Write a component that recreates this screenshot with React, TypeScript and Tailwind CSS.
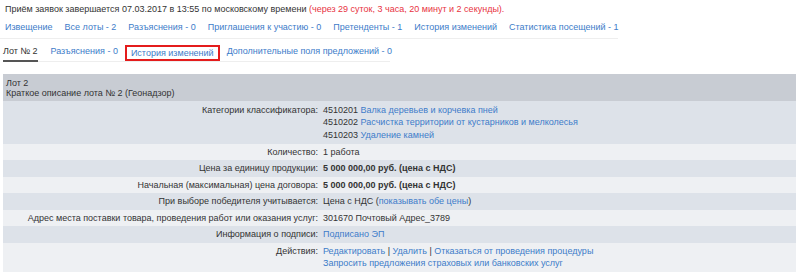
const LINK = "text-[#3d7cc9]";

const topTabs = [
  "Извещение",
  "Все лоты - 2",
  "Разъяснения - 0",
  "Приглашения к участию - 0",
  "Претенденты - 1",
  "История изменений",
  "Статистика посещений - 1",
];

type Row = {
  label: string;
  value: React.ReactNode;
};

const rows: Row[] = [
  {
    label: "Категории классификатора:",
    value: (
      <>
        <div>
          4510201 <span className={LINK}>Валка деревьев и корчевка пней</span>
        </div>
        <div>
          4510202{" "}
          <span className={LINK}>
            Расчистка территории от кустарников и мелколесья
          </span>
        </div>
        <div>
          4510203 <span className={LINK}>Удаление камней</span>
        </div>
      </>
    ),
  },
  { label: "Количество:", value: "1 работа" },
  {
    label: "Цена за единицу продукции:",
    value: <b>5 000 000,00 руб. (цена с НДС)</b>,
  },
  {
    label: "Начальная (максимальная) цена договора:",
    value: <b>5 000 000,00 руб. (цена с НДС)</b>,
  },
  {
    label: "При выборе победителя учитывается:",
    value: (
      <>
        Цена с НДС (<span className={LINK}>показывать обе цены</span>)
      </>
    ),
  },
  {
    label: "Адрес места поставки товара, проведения работ или оказания услуг:",
    value: "301670 Почтовый Адрес_3789",
  },
  {
    label: "Информация о подписи:",
    value: <span className={LINK}>Подписано ЭП</span>,
  },
  {
    label: "Действия:",
    value: (
      <>
        <div>
          <span className={LINK}>Редактировать</span> |{" "}
          <span className={LINK}>Удалить</span> |{" "}
          <span className={LINK}>Отказаться от проведения процедуры</span>
        </div>
        <div className={LINK}>
          Запросить предложения страховых или банковских услуг
        </div>
      </>
    ),
  },
];

export default function App() {
  return (
    <div className="h-[274px] w-[800px] overflow-hidden whitespace-nowrap bg-white [font-family:'Liberation_Sans',Arial,sans-serif] text-[9px] leading-[13px] text-[#333]">
      <div className="px-[5px] pt-[3px]">
        Приём заявок завершается 07.03.2017 в 13:55 по московскому времени{" "}
        <span className="text-[#e8333f]">
          (через 29 суток, 3 часа, 20 минут и 2 секунды).
        </span>
      </div>

      <div className="mt-[5px] flex w-[618px] gap-[12px] border-b border-[#eeeeee] pb-[4px] pl-[5px]">
        {topTabs.map((tab) => (
          <span key={tab} className={`${LINK} shrink-0`}>
            {tab}
          </span>
        ))}
      </div>

      <div className="mt-[6px] ml-[3px] flex w-[387px] items-end gap-[13px] border-b border-[#eeeeee]">
        <span className="-mb-px shrink-0 border-b-2 border-[#555] pb-[2px]">
          Лот № 2
        </span>
        <span className={`${LINK} shrink-0 pb-[3px]`}>Разъяснения - 0</span>
        <span
          className={`${LINK} -mx-[6px] shrink-0 border-2 border-[#e41c1c] px-[4px] leading-[12px]`}
        >
          История изменений
        </span>
        <span className={`${LINK} shrink-0 pb-[3px]`}>
          Дополнительные поля предложений - 0
        </span>
      </div>

      <div className="mt-[12px] ml-[3px] w-[793px]">
        <div className="bg-[#c8ccd3] pt-[4px] pb-[3px] pl-[3px] leading-[10px]">
          <div>Лот 2</div>
          <div>Краткое описание лота № 2 (Геонадзор)</div>
        </div>
        {rows.map((row, index) => (
          <div
            key={row.label}
            className={`grid grid-cols-[318px_1fr] leading-[12.5px] ${
              index === 0 ? "py-[2.5px]" : "py-[2px]"
            } ${index % 2 === 0 ? "bg-[#dde2e9]" : "bg-[#eef0f3]"}`}
          >
            <div className="pr-[3px] text-right">{row.label}</div>
            <div className="pl-[2px]">{row.value}</div>
          </div>
        ))}
      </div>
    </div>
  );
}
